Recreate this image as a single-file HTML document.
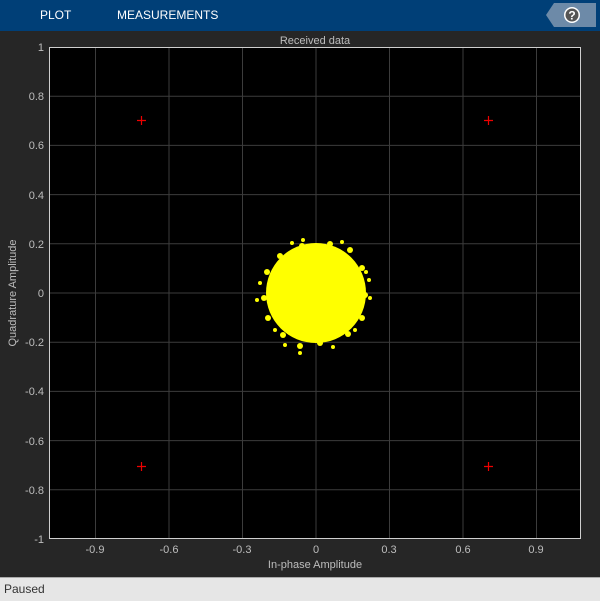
<!DOCTYPE html><html><head><style>
body{margin:0;width:600px;height:600px;overflow:hidden;background:#262626;font-family:"Liberation Sans",Arial,sans-serif}
.top{position:absolute;left:0;top:0;width:600px;height:31px;background:#003f77;color:#fff;font-size:12px}
.top span{position:absolute;top:8px}
.status{position:absolute;left:0;top:577px;width:600px;height:23px;background:#e6e6e6;border-top:1px solid #aaa;font-size:12px;color:#333}
</style></head><body>
<div class="top"><span style="left:40px">PLOT</span><span style="left:117px">MEASUREMENTS</span>
<svg style="position:absolute;left:546px;top:3px" width="54" height="24"><polygon points="8,0 50,0 50,24 8,24 0,12" fill="#6d8aa8"/><circle cx="26" cy="12" r="8" fill="#fff"/><circle cx="26" cy="12" r="6.5" fill="#555"/><text x="26" y="16.5" font-size="12" font-weight="bold" fill="#fff" text-anchor="middle" font-family="Liberation Sans">?</text></svg></div>
<svg style="position:absolute;left:0;top:31px" width="600" height="546" viewBox="0 31 600 546" font-family="Liberation Sans" font-size="11" fill="#bdbdbd">
<rect x="49" y="47" width="532" height="492" fill="#000"/>
<g stroke="#3c3c3c" stroke-width="1">
<line x1="95.5" y1="47" x2="95.5" y2="539"/><line x1="169" y1="47" x2="169" y2="539"/><line x1="242.5" y1="47" x2="242.5" y2="539"/><line x1="316" y1="47" x2="316" y2="539"/><line x1="389.5" y1="47" x2="389.5" y2="539"/><line x1="463" y1="47" x2="463" y2="539"/><line x1="536.5" y1="47" x2="536.5" y2="539"/>
<line x1="49" y1="96.2" x2="581" y2="96.2"/><line x1="49" y1="145.4" x2="581" y2="145.4"/><line x1="49" y1="194.6" x2="581" y2="194.6"/><line x1="49" y1="243.8" x2="581" y2="243.8"/><line x1="49" y1="293" x2="581" y2="293"/><line x1="49" y1="342.2" x2="581" y2="342.2"/><line x1="49" y1="391.4" x2="581" y2="391.4"/><line x1="49" y1="440.6" x2="581" y2="440.6"/><line x1="49" y1="489.8" x2="581" y2="489.8"/>
</g>
<rect x="49.5" y="47.5" width="531" height="491" fill="none" stroke="#cfcfcf"/>
<g fill="#ff0" >
<circle cx="316" cy="293" r="50"/>
<circle cx="302" cy="246" r="3"/><circle cx="330" cy="244" r="3"/><circle cx="350" cy="250" r="3"/><circle cx="362" cy="268" r="3"/><circle cx="365" cy="295" r="3"/><circle cx="362" cy="318" r="3"/><circle cx="348" cy="334" r="3"/><circle cx="320" cy="343" r="3"/><circle cx="300" cy="346" r="3"/><circle cx="283" cy="335" r="3"/><circle cx="268" cy="318" r="3"/><circle cx="264" cy="298" r="3"/><circle cx="267" cy="272" r="3"/><circle cx="280" cy="256" r="3"/>
<circle cx="300" cy="353" r="2"/><circle cx="292" cy="243" r="2"/><circle cx="342" cy="242" r="2"/><circle cx="369" cy="280" r="2"/><circle cx="370" cy="298" r="2"/><circle cx="257" cy="300" r="2"/><circle cx="260" cy="283" r="2"/><circle cx="275" cy="330" r="2"/><circle cx="355" cy="330" r="2"/><circle cx="285" cy="345" r="2"/><circle cx="333" cy="347" r="2"/><circle cx="366" cy="272" r="2"/><circle cx="303" cy="240" r="2"/>
</g>
<g stroke="#e00" stroke-width="1.2"><path d="M137 120.5h9M141.5 116v9M484 120.5h9M488.5 116v9M137 466.5h9M141.5 462v9M484 466.5h9M488.5 462v9"/></g>
<g text-anchor="end">
<text x="44" y="51">1</text><text x="44" y="100">0.8</text><text x="44" y="149">0.6</text><text x="44" y="199">0.4</text><text x="44" y="248">0.2</text><text x="44" y="297">0</text><text x="44" y="346">-0.2</text><text x="44" y="395">-0.4</text><text x="44" y="445">-0.6</text><text x="44" y="494">-0.8</text><text x="44" y="543">-1</text>
</g>
<g text-anchor="middle">
<text x="95" y="553">-0.9</text><text x="169" y="553">-0.6</text><text x="242" y="553">-0.3</text><text x="316" y="553">0</text><text x="389" y="553">0.3</text><text x="463" y="553">0.6</text><text x="536" y="553">0.9</text>
<text x="315" y="568">In-phase Amplitude</text>
<text x="315" y="44">Received data</text>
<text transform="translate(16,293) rotate(-90)">Quadrature Amplitude</text>
</g>
</svg>
<div class="status"><span style="position:absolute;left:4px;top:4px">Paused</span></div>
</body></html>
